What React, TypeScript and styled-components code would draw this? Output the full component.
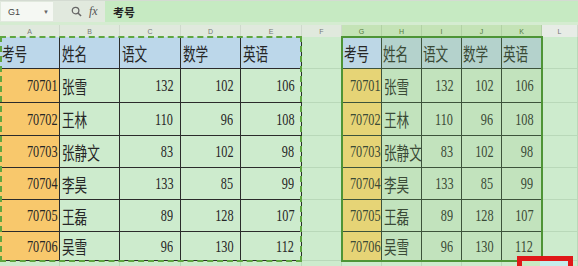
import styled, { createGlobalStyle } from 'styled-components';

const GlobalStyle = createGlobalStyle`
  html, body {
    margin: 0;
    padding: 0;
    background: #cdebcd;
    overflow: hidden;
  }
  body {
    font-family: "Noto Sans CJK SC", "Noto Sans", sans-serif;
  }
`;

// --- data ---
const colWidths = [60, 60, 61, 60, 61, 40, 40, 40, 40, 40, 40, 36];
const colLetters = ['A', 'B', 'C', 'D', 'E', 'F', 'G', 'H', 'I', 'J', 'K', 'L'];
const rowHeights = [32, 34, 33, 32, 32, 32, 29, 12];

const headers = ['考号', '姓名', '语文', '数学', '英语'];
const students = [
  ['70701', '张雪', '132', '102', '106'],
  ['70702', '王林', '110', '96', '108'],
  ['70703', '张静文', '83', '102', '98'],
  ['70704', '李昊', '133', '85', '99'],
  ['70705', '王磊', '89', '128', '107'],
  ['70706', '吴雪', '96', '130', '112'],
];

type Kind = 'head' | 'id' | 'data' | 'empty' | 'activeHead' | 'selHead' | 'selId' | 'selData';

const fills: Record<Kind, string> = {
  head: '#bcd7ea',
  id: '#f8c86c',
  data: '#cdebcd',
  empty: '#cdebcd',
  activeHead: '#bdd7e6',
  selHead: '#b4d2cc',
  selId: '#e6d476',
  selData: '#c2e3bd',
};

const lineColor = (k: Kind) =>
  k === 'empty' ? '#b9d8b9' : k.startsWith('sel') || k === 'activeHead' ? '#3d533b' : '#2b2b2b';

// --- toolbar ---
const Toolbar = styled.div`
  display: flex;
  align-items: center;
  height: 22px;
  background: #e1e9de;
  border-top: 1px solid #d4dbd2;
  box-sizing: border-box;
`;

const NameBox = styled.div`
  display: flex;
  align-items: center;
  justify-content: space-between;
  width: 52px;
  height: 19px;
  margin-left: 1px;
  padding: 0 4px 0 7px;
  box-sizing: border-box;
  background: #f5f8f3;
  font-family: "Liberation Sans", sans-serif;
  font-size: 9px;
  color: #444;
`;

const Caret = styled.span`
  font-size: 6px;
  color: #666;
`;

const ToolIcons = styled.div`
  display: flex;
  align-items: center;
  gap: 7px;
  width: 52px;
  padding-left: 18px;
  box-sizing: border-box;
`;

const Fx = styled.span`
  font-family: "Liberation Serif", serif;
  font-style: italic;
  font-size: 12px;
  color: #555;
`;

const FormulaBar = styled.div`
  flex: 1;
  height: 21px;
  display: flex;
  align-items: center;
  padding-left: 8px;
  background: #c6eac2;
  font-size: 11px;
  font-weight: 700;
  color: #222;
`;

const Strip = styled.div`
  height: 3px;
  background: #d5ecd1;
`;

// --- column letters ---
const ColumnBar = styled.div`
  display: grid;
  grid-template-columns: ${colWidths.map((w) => `${w}px`).join(' ')};
  height: 12px;
`;

const ColumnLetter = styled.div<{ $selected?: boolean; $last?: boolean }>`
  display: flex;
  align-items: center;
  justify-content: center;
  background: ${(p) => (p.$selected ? '#c4e3b6' : p.$last ? '#e7ece6' : '#e0e9dd')};
  border-right: 1px solid ${(p) => (p.$selected ? '#b2d1a4' : '#cfd9cc')};
  font-family: "Liberation Sans", sans-serif;
  font-size: 7px;
  color: ${(p) => (p.$selected ? '#557a3e' : '#777')};
`;

// --- sheet ---
const Sheet = styled.div`
  position: relative;
  display: grid;
  grid-template-columns: ${colWidths.map((w) => `${w}px`).join(' ')};
  grid-template-rows: ${rowHeights.map((h) => `${h}px`).join(' ')};
`;

const Cell = styled.div<{ $kind: Kind; $row: number; $col: number; $right?: boolean; $pad?: number }>`
  grid-row: ${(p) => p.$row};
  grid-column: ${(p) => p.$col};
  display: flex;
  align-items: center;
  justify-content: ${(p) => (p.$right ? 'flex-end' : 'flex-start')};
  padding: ${(p) => (p.$right ? `0 ${p.$pad ?? 7}px 0 0` : `0 0 0 ${p.$pad ?? 2}px`)};
  box-sizing: border-box;
  min-width: 0;
  white-space: nowrap;
  background: ${(p) => fills[p.$kind]};
  border-right: 1px solid ${(p) => lineColor(p.$kind)};
  border-bottom: 1px solid ${(p) => lineColor(p.$kind)};
  color: ${(p) => (p.$kind.startsWith('sel') ? '#3a4a36' : '#262626')};
`;

const Han = styled.span`
  display: inline-block;
  flex-shrink: 0;
  font-size: 18px;
  line-height: 1;
  transform: scaleX(0.7);
  transform-origin: left center;
`;

const Num = styled.span`
  display: inline-block;
  flex-shrink: 0;
  font-family: "Liberation Serif", serif;
  font-size: 17px;
  line-height: 1;
  transform: scaleX(0.72);
  transform-origin: right center;
`;

const Marquee = styled.div`
  grid-column: 1 / 6;
  grid-row: 1 / 8;
  border: 2px dashed #5fa640;
  margin: -1px 0 -1px 0;
  pointer-events: none;
  z-index: 2;
`;

const Selection = styled.div`
  grid-column: 7 / 12;
  grid-row: 1 / 8;
  border: 2px solid #4e9436;
  margin: -1px;
  pointer-events: none;
  z-index: 2;
`;

const Callout = styled.div`
  position: absolute;
  left: 517px;
  top: 219px;
  width: 56px;
  height: 30px;
  border: 5px solid #e01818;
  box-sizing: border-box;
  background: linear-gradient(90deg, #c8e9c3 0 40%, #c5ecec 40% 100%);
  z-index: 3;
`;

function SearchIcon() {
  return (
    <svg width="11" height="11" viewBox="0 0 12 12">
      <circle cx="5" cy="5" r="3.6" fill="none" stroke="#666" strokeWidth="1.4" />
      <line x1="7.6" y1="7.6" x2="11" y2="11" stroke="#666" strokeWidth="1.6" />
    </svg>
  );
}

function renderTable(right: boolean) {
  const startCol = right ? 7 : 1;
  const cells = headers.map((h, c) => {
    const kind: Kind = !right ? 'head' : c === 0 ? 'activeHead' : 'selHead';
    return (
      <Cell key={`${right}-h-${c}`} $kind={kind} $row={1} $col={startCol + c} $pad={right && c > 0 ? 1 : 2}>
        <Han>{h}</Han>
      </Cell>
    );
  });
  students.forEach((row, r) => {
    row.forEach((value, c) => {
      const isNum = c !== 1;
      const kind: Kind = !right ? (c === 0 ? 'id' : 'data') : c === 0 ? 'selId' : 'selData';
      const pad = c === 0 ? (right ? 1 : 2) : right ? 8 : 7;
      cells.push(
        <Cell
          key={`${right}-${r}-${c}`}
          $kind={kind}
          $row={r + 2}
          $col={startCol + c}
          $right={isNum}
          $pad={isNum ? pad : 2}
        >
          {isNum ? <Num>{value}</Num> : <Han>{value}</Han>}
        </Cell>
      );
    });
  });
  return cells;
}

export default function App() {
  const emptyCells: { row: number; col: number }[] = [];
  rowHeights.forEach((_, r) => {
    colWidths.forEach((_, c) => {
      const inTable = r < 7 && (c < 5 || (c >= 6 && c <= 10));
      if (!inTable) emptyCells.push({ row: r + 1, col: c + 1 });
    });
  });

  return (
    <>
      <GlobalStyle />
      <Toolbar>
        <NameBox>
          G1<Caret>▼</Caret>
        </NameBox>
        <ToolIcons>
          <SearchIcon />
          <Fx>fx</Fx>
        </ToolIcons>
        <FormulaBar>考号</FormulaBar>
      </Toolbar>
      <Strip />
      <ColumnBar>
        {colLetters.map((l, i) => (
          <ColumnLetter key={l} $selected={i >= 6 && i <= 10} $last={i === 11}>
            {l}
          </ColumnLetter>
        ))}
      </ColumnBar>
      <Sheet>
        {renderTable(false)}
        {renderTable(true)}
        {emptyCells.map((e) => (
          <Cell key={`e-${e.row}-${e.col}`} $kind="empty" $row={e.row} $col={e.col} />
        ))}
        <Marquee />
        <Selection />
        <Callout />
      </Sheet>
    </>
  );
}
